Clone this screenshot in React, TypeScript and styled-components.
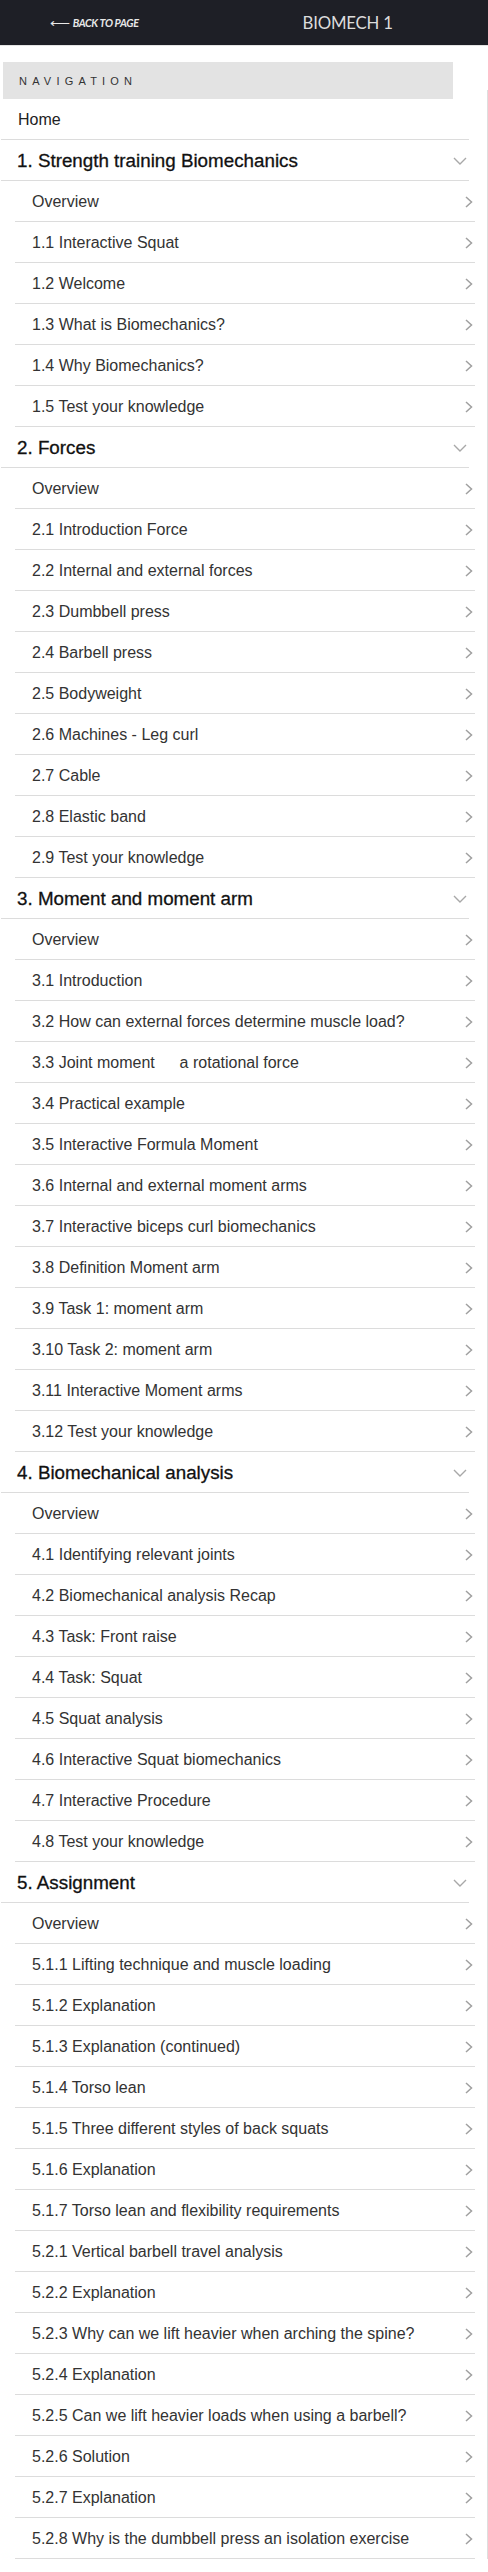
import React from "react";
import styled, { createGlobalStyle } from "styled-components";

const Global = createGlobalStyle`
  html, body { margin: 0; padding: 0; background: #fff; }
  body { font-family: "Liberation Sans", Arial, sans-serif; }
  * { box-sizing: border-box; }
`;

const TopBar = styled.header`
  height: 46px;
  background: #1e1f26;
  border-bottom: 1px solid #e4e4e4;
  display: flex;
  align-items: center;
`;

const BackLink = styled.a`
  margin-left: 50px;
  display: flex;
  align-items: center;
  gap: 3px;
  color: #e8e8e8;
  font-family: Lato, "Liberation Sans", sans-serif;
  font-style: italic;
  font-weight: 700;
  font-size: 10.7px;
  letter-spacing: -0.35px;
  text-decoration: none;
`;

const Arrow = styled.span`
  font-style: normal;
  font-weight: 400;
  font-size: 14px;
`;

const Title = styled.div`
  margin-left: 164px;
  color: #dcdcdc;
  font-family: Lato, "Liberation Sans", sans-serif;
  font-size: 16.8px;
  letter-spacing: -0.2px;
`;

const Body = styled.div`
  display: flex;
`;

const Sidebar = styled.nav`
  width: 487px;
  padding-left: 1px;
`;

const ScrollEdge = styled.div`
  width: 1px;
  margin-top: 44px;
  background: #dedede;
`;

const NavTitle = styled.div`
  margin: 16px 0 0 2px;
  width: 450px;
  height: 37px;
  background: #e3e3e3;
  display: flex;
  align-items: center;
  padding-left: 16px;
  font-size: 11px;
  letter-spacing: 5.2px;
  color: #333;
`;

const HomeRow = styled.div`
  width: 468px;
  height: 41px;
  border-bottom: 1px solid #dcdcdc;
  display: flex;
  align-items: center;
  padding: 1px 0 0 17px;
  font-size: 16px;
  color: #222;
`;

const SectionRow = styled.div`
  width: 468px;
  height: 41px;
  border-bottom: 1px solid #dcdcdc;
  display: flex;
  align-items: center;
  justify-content: space-between;
  padding: 1px 2px 0 16px;
  font-size: 18.8px;
  color: #111;
  -webkit-text-stroke: 0.3px #111;
`;

const SubList = styled.ul`
  list-style: none;
  margin: 0 0 0 14px;
  padding: 0;
  width: 460px;
`;

const SubRow = styled.li`
  height: 41px;
  border-bottom: 1px solid #dcdcdc;
  display: flex;
  align-items: center;
  justify-content: space-between;
  padding: 1px 2px 0 17px;
  font-size: 16px;
  color: #333;
`;

const Hidden = styled.span`
  color: transparent;
`;

const Chevron = ({ dir }: { dir: "down" | "right" }) =>
  dir === "down" ? (
    <svg width="14" height="8" viewBox="0 0 14 8">
      <polyline points="1,1 7,7 13,1" fill="none" stroke="#a8a8a8" strokeWidth="1.4" />
    </svg>
  ) : (
    <svg width="8" height="12" viewBox="0 0 8 12">
      <polyline points="1,1 6.5,6 1,11" fill="none" stroke="#a0a0a0" strokeWidth="1.5" />
    </svg>
  );

type Section = { title: string; items: React.ReactNode[] };

const sections: Section[] = [
  {
    title: "1. Strength training Biomechanics",
    items: ["Overview", "1.1 Interactive Squat", "1.2 Welcome", "1.3 What is Biomechanics?", "1.4 Why Biomechanics?", "1.5 Test your knowledge"],
  },
  {
    title: "2. Forces",
    items: [
      "Overview",
      "2.1 Introduction Force",
      "2.2 Internal and external forces",
      "2.3 Dumbbell press",
      "2.4 Barbell press",
      "2.5 Bodyweight",
      "2.6 Machines - Leg curl",
      "2.7 Cable",
      "2.8 Elastic band",
      "2.9 Test your knowledge",
    ],
  },
  {
    title: "3. Moment and moment arm",
    items: [
      "Overview",
      "3.1 Introduction",
      "3.2 How can external forces determine muscle load?",
      <>
        3.3 Joint moment <Hidden>—</Hidden> a rotational force
      </>,
      "3.4 Practical example",
      "3.5 Interactive Formula Moment",
      "3.6 Internal and external moment arms",
      "3.7 Interactive biceps curl biomechanics",
      "3.8 Definition Moment arm",
      "3.9 Task 1: moment arm",
      "3.10 Task 2: moment arm",
      "3.11 Interactive Moment arms",
      "3.12 Test your knowledge",
    ],
  },
  {
    title: "4. Biomechanical analysis",
    items: [
      "Overview",
      "4.1 Identifying relevant joints",
      "4.2 Biomechanical analysis Recap",
      "4.3 Task: Front raise",
      "4.4 Task: Squat",
      "4.5 Squat analysis",
      "4.6 Interactive Squat biomechanics",
      "4.7 Interactive Procedure",
      "4.8 Test your knowledge",
    ],
  },
  {
    title: "5. Assignment",
    items: [
      "Overview",
      "5.1.1 Lifting technique and muscle loading",
      "5.1.2 Explanation",
      "5.1.3 Explanation (continued)",
      "5.1.4 Torso lean",
      "5.1.5 Three different styles of back squats",
      "5.1.6 Explanation",
      "5.1.7 Torso lean and flexibility requirements",
      "5.2.1 Vertical barbell travel analysis",
      "5.2.2 Explanation",
      "5.2.3 Why can we lift heavier when arching the spine?",
      "5.2.4 Explanation",
      "5.2.5 Can we lift heavier loads when using a barbell?",
      "5.2.6 Solution",
      "5.2.7 Explanation",
      "5.2.8 Why is the dumbbell press an isolation exercise",
    ],
  },
];

export default function App() {
  return (
    <>
      <Global />
      <TopBar>
        <BackLink href="#">
          <Arrow>⟵</Arrow>
          BACK TO PAGE
        </BackLink>
        <Title>BIOMECH 1</Title>
      </TopBar>
      <Body>
        <Sidebar>
          <NavTitle>NAVIGATION</NavTitle>
          <HomeRow>Home</HomeRow>
          {sections.map((s) => (
            <div key={s.title}>
              <SectionRow>
                <span>{s.title}</span>
                <Chevron dir="down" />
              </SectionRow>
              <SubList>
                {s.items.map((it, i) => (
                  <SubRow key={i}>
                    <span>{it}</span>
                    <Chevron dir="right" />
                  </SubRow>
                ))}
              </SubList>
            </div>
          ))}
        </Sidebar>
        <ScrollEdge />
      </Body>
    </>
  );
}
